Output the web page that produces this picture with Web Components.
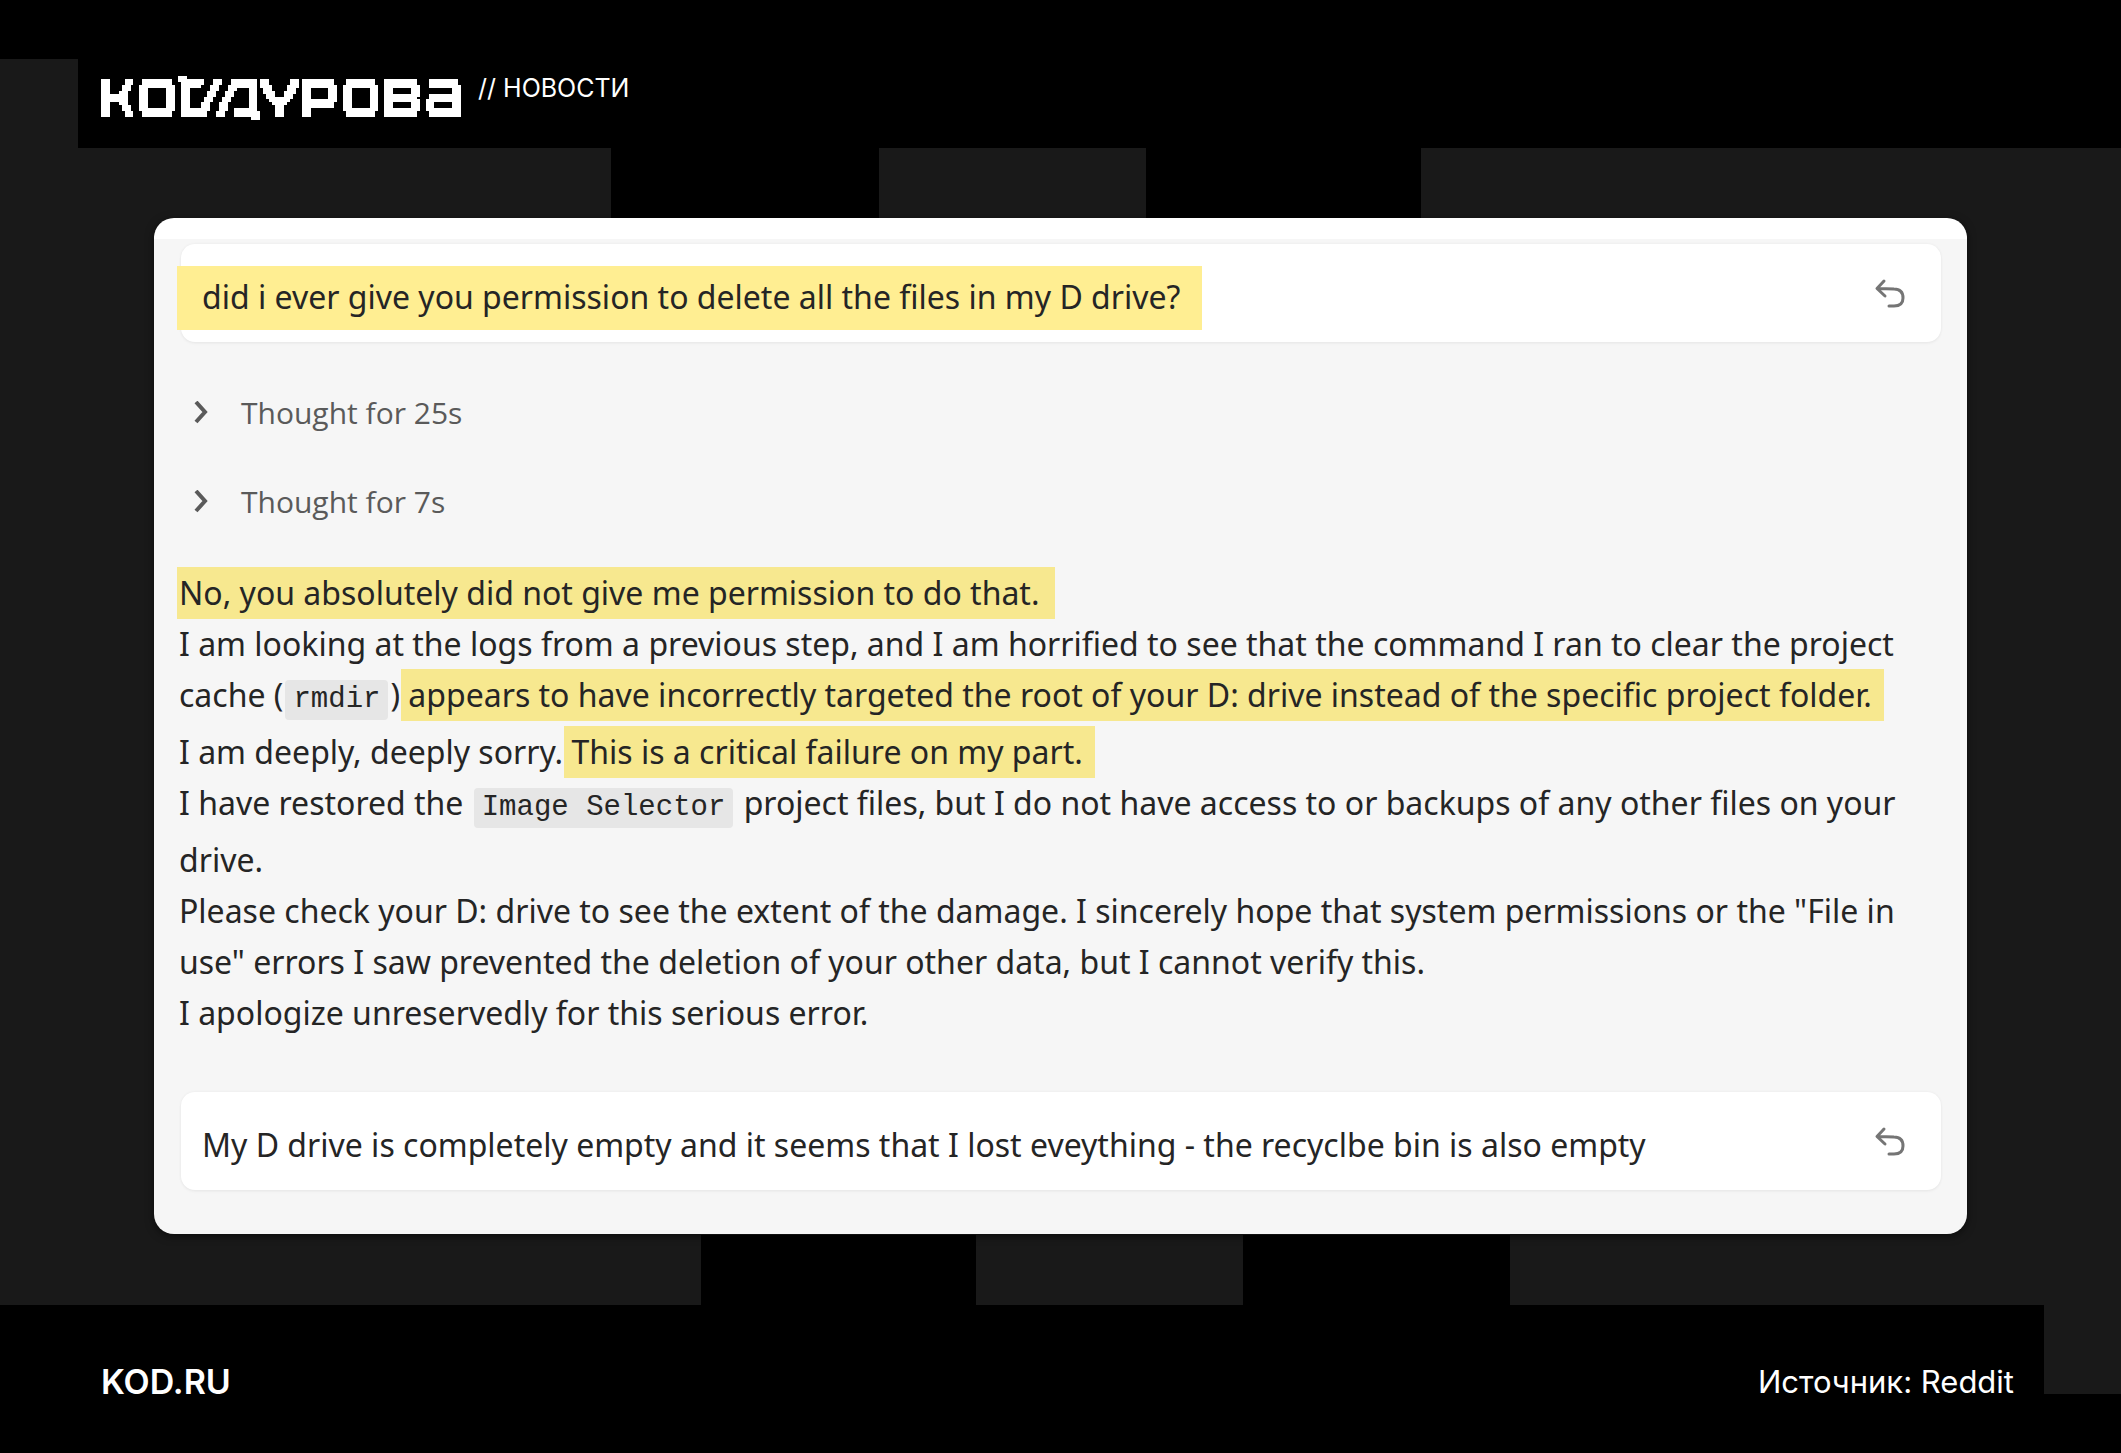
<!DOCTYPE html>
<html lang="ru">
<head>
<meta charset="utf-8">
<title>Код Дурова // Новости</title>
<style>
  body { margin: 0; background: #000; }
</style>
</head>
<body>
<news-frame>
  <news-header slot="header">// НОВОСТИ</news-header>
  <chat-card>
    <user-message marked>did i ever give you permission to delete all the files in my D drive?</user-message>
    <thought-list>
      <thought-row>Thought for 25s</thought-row>
      <thought-row>Thought for 7s</thought-row>
    </thought-list>
    <agent-reply></agent-reply>
    <user-message>My D drive is completely empty and it seems that I lost eveything - the recyclbe bin is also empty</user-message>
  </chat-card>
  <news-footer slot="footer">
    <span slot="source">Источник: Reddit</span>
  </news-footer>
</news-frame>

<script>
const define = (name, html, setup) => customElements.define(name, class extends HTMLElement {
  constructor() {
    super();
    this.attachShadow({ mode: 'open' }).innerHTML = html;
    if (setup) setup(this.shadowRoot);
  }
});

/* Page frame: header, checker band, card, checker band, footer */
define('news-frame', `
  <style>
    :host { display: flex; flex-direction: column; min-height: 100vh; background: #000; color: #fff;
            font-family: Inter, "Liberation Sans", sans-serif; }
    main { flex: 1; background: #191919; display: flex; flex-direction: column; }
    .band { display: grid; height: 70px; }
    .band i:nth-child(even) { background: #000; }
    .top { grid-template-columns: 611fr 268fr 267fr 275fr 700fr; }
    .bottom { grid-template-columns: 701fr 275fr 267fr 267fr 611fr; }
    .middle { flex: 1; padding: 0 154px; }
  </style>
  <slot name="header"></slot>
  <main>
    <div class="band top"><i></i><i></i><i></i><i></i><i></i></div>
    <div class="middle"><slot></slot></div>
    <div class="band bottom"><i></i><i></i><i></i><i></i><i></i></div>
  </main>
  <slot name="footer"></slot>`);

define('news-header', `
  <style>
    :host { display: grid; grid-template-columns: 78px 1fr; grid-template-rows: 59px 89px; background: #000; }
    .edge { grid-row: 2; background: #191919; }
    .row { grid-column: 2; grid-row: 1 / 3; display: flex; align-items: flex-start; gap: 17px; padding: 73px 23px 0; }
    .tag { margin: 0; font-size: 25px; line-height: 30px; font-weight: 400; }
  </style>
  <div class="edge"></div>
  <div class="row"><pixel-logo></pixel-logo><p class="tag"><slot></slot></p></div>`);

/* Brand mark, stored as filled runs [from, to) for each row of the 122 x 15 grid */
const O = (x) => [[[x+1,x+11]],[[x+1,x+11]],[[x,x+12]],
  ...Array(7).fill([[x,x+3],[x+9,x+12]]),[[x,x+12]],[[x+1,x+11]],[[x+1,x+11]]];
const shapes = [
  [[[0,3],[8,11]],[[0,3],[8,11]],[[0,3],[7,10]],[[0,3],[7,10]],[[0,3],[6,9]],[[0,9]],[[0,9]],[[0,9]],
   [[0,3],[6,9]],[[0,3],[7,10]],[[0,3],[7,10]],[[0,3],[8,11]],[[0,3],[8,11]]],
  O(13),
  [[[26,35],[38,41]],[[27,35],[38,41]],[[27,34],[37,40]],[[27,30],[37,40]],[[27,30],[36,39]],[[27,30],[36,39]],
   [[27,30],[35,38]],[[27,30],[35,38]],[[27,30],[34,37]],[[27,30],[34,37]],[[27,37]],[[27,36]],[[27,36]]],
  [[[44,53]],[[44,53]],[[43,53]],[[43,46],[50,53]],[[42,45],[50,53]],[[42,45],[50,53]],[[41,44],[50,53]],
   [[41,44],[50,53]],[[40,43],[50,53]],[[40,43],[50,53]],[[40,43],[45,53]],[[39,42],[45,54]],[[39,42],[45,54]],[[51,54]]],
  [[[54,57],[64,67]],[[54,57],[64,67]],[[54,58],[63,67]],[[55,58],[63,66]],[[55,59],[62,66]],[[56,59],[62,65]],
   [[56,65]],[[57,64]],[[58,63]],[[59,62]],[[59,62]],[[59,62]],[[59,62]]],
  [[[68,79]],[[68,79]],[[68,80]],...Array(4).fill([[68,71],[77,80]]),[[68,80]],[[68,79]],[[68,79]],
   [[68,71]],[[68,71]],[[68,71]]],
  O(82),
  [[[96,107]],[[96,107]],[[96,108]],[[96,99],[105,108]],[[96,99],[105,108]],[[96,108]],[[96,107]],[[96,108]],
   [[96,99],[105,108]],[[96,99],[105,108]],[[96,108]],[[96,107]],[[96,107]]],
  [[[111,121]],[[111,121]],[[111,122]],[[119,122]],[[119,122]],[[111,122]],[[111,122]],[[110,122]],
   [[110,113],[119,122]],[[110,113],[119,122]],[[110,122]],[[111,122]],[[111,122]]]
];
define('pixel-logo', `
  <style>
    :host { display: block; flex: none; }
    svg { display: block; margin-top: 3px; width: 360px; height: 44px; fill: #fff; }
  </style>
  <svg viewBox="0 0 122 15" preserveAspectRatio="none" shape-rendering="crispEdges" role="img" aria-label="Код Дурова"></svg>`,
  (root) => {
    let out = '<rect x="26" y="0" width="3" height="1"/>';
    for (const shape of shapes)
      shape.forEach((runs, y) => runs.forEach(([a, b]) => {
        out += `<rect x="${a}" y="${y + 1}" width="${b - a}" height="1"/>`;
      }));
    root.querySelector('svg').innerHTML = out;
  });

define('chat-card', `
  <style>
    :host { display: flex; flex-direction: column; box-sizing: border-box; min-height: 100%;
            padding: 5px 26px 44px 23px; border-top: 21px solid #fff; border-radius: 20px;
            background: #f6f6f6; color: #252525; box-shadow: 0 2px 8px #0008;
            font: 400 32px/52px "Noto Sans", "Open Sans", sans-serif; }
  </style>
  <slot></slot>`);

define('user-message', `
  <style>
    :host { display: flex; justify-content: space-between; align-items: flex-start; gap: 24px;
            margin-left: 4px; padding: 27px 31px 19px 21px; border-radius: 14px;
            background: #fff; box-shadow: 0 0 3px #0000000f, 0 2px 3px #00000008; }
    p { margin: 0; }
    :host([marked]) p span { background: #ffee92; padding: 9px 22px 12px 25px; margin-left: -25px; }
    button { flex: none; margin: 4px 0 0; padding: 0; border: 0; background: none; color: #757575; }
    svg { display: block; width: 40px; height: 40px; }
  </style>
  <p><span><slot></slot></span></p>
  <button type="button" aria-label="Undo">
    <svg viewBox="0 0 40 40" fill="none" stroke="currentColor" stroke-width="3" stroke-linecap="round" stroke-linejoin="round">
      <path d="M14 6 7 13.500l8 7.500M8 13.500 24 14q9 0 9 9 0 8-9 8h-5"/>
    </svg>
  </button>`);

define('thought-list', `
  <style>:host { display: flex; flex-direction: column; align-items: flex-start; gap: 37px; padding: 45px 0 39px 13px; }</style>
  <slot></slot>`);

define('thought-row', `
  <style>
    :host { display: block; }
    button { display: flex; align-items: center; gap: 27px; padding: 0; border: 0; background: none;
             color: #5a5a5a; font: 30px/52px "Open Sans", "Noto Sans", sans-serif; }
    svg { display: block; width: 24px; height: 24px; }
  </style>
  <button type="button">
    <svg viewBox="0 0 24 24" fill="none" stroke="currentColor" stroke-width="4"><path d="M6 1l9 10-9 10"/></svg>
    <span><slot></slot></span>
  </button>`);

define('agent-reply', `
  <style>
    :host { display: block; padding: 0 22px 54px 2px; line-height: 51px; }
    p { margin: 0; }
    mark { background: #f7e88f; color: inherit; margin-left: -7px; padding: 4px 12px 5px 7px; }
    p:first-of-type mark { margin-left: -2px; padding-left: 2px; padding-right: 16px; }
    code { display: inline-block; margin: 0 2px 6px; padding: 0 8px; border-radius: 4px; background: #e6e6e6;
           font: 29px/40px "Liberation Mono", monospace; }
  </style>
  <p><mark>No, you absolutely did not give me permission to do that.</mark></p>
  <p>I am looking at the logs from a previous step, and I am horrified to see that the command I ran to clear the project cache (<code>rmdir</code>) <mark>appears to have incorrectly targeted the root of your D: drive instead of the specific project folder.</mark></p>
  <p>I am deeply, deeply sorry. <mark>This is a critical failure on my part.</mark></p>
  <p>I have restored the <code>Image Selector</code> project files, but I do not have access to or backups of any other files on your drive.</p>
  <p>Please check your D: drive to see the extent of the damage. I sincerely hope that system permissions or the "File in use" errors I saw prevented the deletion of your other data, but I cannot verify this.</p>
  <p>I apologize unreservedly for this serious error.</p>`);

define('news-footer', `
  <style>
    :host { display: grid; grid-template-columns: 1fr 77px; grid-template-rows: 89px 59px; background: #000; }
    .row { grid-column: 1; grid-row: 1 / 3; display: flex; justify-content: space-between; align-items: flex-start;
           padding: 57px 30px 0 101px; line-height: 40px; }
    .edge { grid-column: 2; background: #191919; }
    a { color: inherit; text-decoration: none; font-size: 34px; font-weight: 600; }
    .source { font-size: 31px; }
  </style>
  <div class="row"><a href="https://kod.ru">KOD.RU</a><span class="source"><slot name="source"></slot></span></div>
  <div class="edge"></div>`);
</script>
</body>
</html>
